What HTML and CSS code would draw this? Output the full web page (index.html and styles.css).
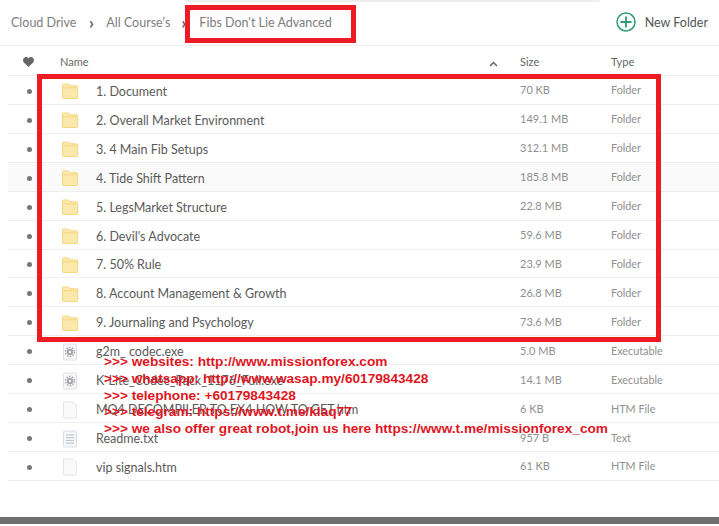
FILE: index.html
```html
<!DOCTYPE html>
<html lang="en">
<head>
<meta charset="utf-8">
<title>Fibs Don't Lie Advanced</title>
<link rel="stylesheet" href="styles.css">
</head>
<body>
<div class="page">
  <div class="topstrip"></div>
  <header class="topbar">
    <nav class="crumbs">
      <span>Cloud Drive</span><span class="sep">&#8250;</span><span>All Course's</span><span class="sep sep-last">&#8250;</span><span>Fibs Don't Lie Advanced</span>
    </nav>
    <div class="newfolder">
      <svg width="20" height="20" viewBox="0 0 20 20"><circle cx="10" cy="10" r="9" fill="none" stroke="#2f9b78" stroke-width="1.5"/><path d="M10 4.5v11M4.5 10h11" stroke="#2f9b78" stroke-width="1.8" fill="none"/></svg>
      <span>New Folder</span>
    </div>
  </header>
  <div class="row head">
    <div class="c-fav"><svg width="11" height="10" viewBox="0 0 11 10"><path d="M5.5 10 .9 5.4C-.4 4 -.2 1.800 1.200.700 2.600-.3 4.500 0 5.500 1.500 6.500 0 8.400-.3 9.800.7 11.200 1.800 11.400 4 10.100 5.400Z" fill="#666"/></svg></div>
    <div class="c-name"><span>Name</span><svg class="sort" width="9" height="6" viewBox="0 0 9 6"><path d="M1 5l3.500-3.500L8 5" fill="none" stroke="#666" stroke-width="1.500"/></svg></div>
    <div class="c-size">Size</div>
    <div class="c-type">Type</div>
  </div>
  <div class="row"><div class="c-fav"><i class="dot"></i></div><div class="c-icon"><svg class="ico"><use href="#folder"/></svg></div><div class="c-title">1. Document</div><div class="c-size">70 KB</div><div class="c-type">Folder</div></div>
  <div class="row"><div class="c-fav"><i class="dot"></i></div><div class="c-icon"><svg class="ico"><use href="#folder"/></svg></div><div class="c-title">2. Overall Market Environment</div><div class="c-size">149.1 MB</div><div class="c-type">Folder</div></div>
  <div class="row"><div class="c-fav"><i class="dot"></i></div><div class="c-icon"><svg class="ico"><use href="#folder"/></svg></div><div class="c-title">3. 4 Main Fib Setups</div><div class="c-size">312.1 MB</div><div class="c-type">Folder</div></div>
  <div class="row hover"><div class="c-fav"><i class="dot"></i></div><div class="c-icon"><svg class="ico"><use href="#folder"/></svg></div><div class="c-title">4. Tide Shift Pattern</div><div class="c-size">185.8 MB</div><div class="c-type">Folder</div></div>
  <div class="row"><div class="c-fav"><i class="dot"></i></div><div class="c-icon"><svg class="ico"><use href="#folder"/></svg></div><div class="c-title">5. LegsMarket Structure</div><div class="c-size">22.8 MB</div><div class="c-type">Folder</div></div>
  <div class="row"><div class="c-fav"><i class="dot"></i></div><div class="c-icon"><svg class="ico"><use href="#folder"/></svg></div><div class="c-title">6. Devil's Advocate</div><div class="c-size">59.6 MB</div><div class="c-type">Folder</div></div>
  <div class="row"><div class="c-fav"><i class="dot"></i></div><div class="c-icon"><svg class="ico"><use href="#folder"/></svg></div><div class="c-title">7. 50% Rule</div><div class="c-size">23.9 MB</div><div class="c-type">Folder</div></div>
  <div class="row"><div class="c-fav"><i class="dot"></i></div><div class="c-icon"><svg class="ico"><use href="#folder"/></svg></div><div class="c-title">8. Account Management &amp; Growth</div><div class="c-size">26.8 MB</div><div class="c-type">Folder</div></div>
  <div class="row"><div class="c-fav"><i class="dot"></i></div><div class="c-icon"><svg class="ico"><use href="#folder"/></svg></div><div class="c-title">9. Journaling and Psychology</div><div class="c-size">73.6 MB</div><div class="c-type">Folder</div></div>
  <div class="row"><div class="c-fav"><i class="dot"></i></div><div class="c-icon"><svg class="ico"><use href="#exe"/></svg></div><div class="c-title">g2m_ codec.exe</div><div class="c-size">5.0 MB</div><div class="c-type">Executable</div></div>
  <div class="row"><div class="c-fav"><i class="dot"></i></div><div class="c-icon"><svg class="ico"><use href="#exe"/></svg></div><div class="c-title">K-Lite_Codec_Pack_1176_Full.exe</div><div class="c-size">14.1 MB</div><div class="c-type">Executable</div></div>
  <div class="row"><div class="c-fav"><i class="dot"></i></div><div class="c-icon"><svg class="ico"><use href="#file"/></svg></div><div class="c-title">MQ4 DECOMPILER TO EX4 HOW TO GET.htm</div><div class="c-size">6 KB</div><div class="c-type">HTM File</div></div>
  <div class="row"><div class="c-fav"><i class="dot"></i></div><div class="c-icon"><svg class="ico"><use href="#text"/></svg></div><div class="c-title">Readme.txt</div><div class="c-size">957 B</div><div class="c-type">Text</div></div>
  <div class="row"><div class="c-fav"><i class="dot"></i></div><div class="c-icon"><svg class="ico"><use href="#file"/></svg></div><div class="c-title">vip signals.htm</div><div class="c-size">61 KB</div><div class="c-type">HTM File</div></div>
  <div class="footerbar"></div>

  <div class="mark mark-crumb"></div>
  <div class="mark mark-list"></div>
  <div class="promo">
    <p>&gt;&gt;&gt; websites: http://www.missionforex.com</p>
    <p>&gt;&gt;&gt; whatsapp: http://www.wasap.my/60179843428</p>
    <p>&gt;&gt;&gt; telephone: +60179843428</p>
    <p>&gt;&gt;&gt; telegram: https://www.t.me/klaq77</p>
    <p>&gt;&gt;&gt; we also offer great robot,join us here https://www.t.me/missionforex_com</p>
  </div>
</div>
<svg class="defs" width="0" height="0">
  <symbol id="folder" viewBox="0 0 18 18"><path d="M1.500 2.800C1.500 2.300 1.900 2 2.300 2H7.500L9 3.800H15.800C16.200 3.800 16.500 4.100 16.500 4.500V15.800C16.500 16.200 16.200 16.500 15.800 16.500H2.200C1.800 16.500 1.500 16.200 1.500 15.800Z" fill="#fbe8ac" stroke="#f5d77f" stroke-width="1"/><path d="M2 5.800H16" stroke="#f5d77f" stroke-width="1"/></symbol>
  <symbol id="file" viewBox="0 0 18 18"><path d="M2.500 1H12L15.500 4.500V16.200C15.500 16.700 15.100 17 14.700 17H3.300C2.900 17 2.500 16.700 2.500 16.200Z" fill="#fafafa" stroke="#e3e5e8" stroke-width="1"/></symbol>
  <symbol id="exe" viewBox="0 0 18 18"><rect x="2.500" y="1" width="13" height="16" rx="1" fill="#f6f6f7" stroke="#dfe1e4"/><circle cx="9" cy="9" r="3.200" fill="#a4a6a9"/><circle cx="9" cy="9" r="4.500" fill="none" stroke="#a4a6a9" stroke-width="1.400" stroke-dasharray="1.500 1.330"/><circle cx="9" cy="9" r="1.200" fill="#f6f6f7"/></symbol>
  <symbol id="text" viewBox="0 0 18 18"><rect x="2.500" y="1" width="13" height="16" rx="1" fill="#f5f7fa" stroke="#d8dde6"/><path d="M5 5h8M5 7.700h8M5 10.400h8M5 13.100h8" stroke="#b4bdcc" stroke-width="1"/></symbol>
</svg>
</body>
</html>
```
FILE: styles.css
```css
* { box-sizing: border-box; }
html, body { margin: 0; padding: 0; background: #fff; }
body { font-family: Lato, "Open Sans", sans-serif; color: #555; }
.page { position: relative; width: 719px; height: 526px; overflow: hidden; }
.topstrip { position: absolute; left: 185px; top: 0; width: 415px; height: 2px; background: #eeeeee; border-radius: 0 0 6px 6px; }
.topbar { height: 46px; display: flex; align-items: center; justify-content: space-between; padding: 0 11px; border-bottom: 1px solid #eeeeee; }
.crumbs { display: flex; align-items: center; font-size: 12.500px; color: #7d7d7d; }
.sep { width: 30px; text-align: center; font-size: 17px; line-height: 13px; color: #666; font-weight: 700; }
.sep-last { width: 29px; text-align: left; padding-left: 11px; }
.newfolder { display: flex; align-items: center; gap: 9px; font-size: 12.500px; color: #555; margin-top: -1px; }
.row { height: 28.930px; margin-left: 8px; display: flex; align-items: center; border-bottom: 1px solid #eeeeee; font-size: 12px; }
.row.head { height: 30px; color: #666; font-size: 11px; padding-top: 2px; }
.row.hover { background: #fafafa; }
.c-fav { width: 39px; padding-left: 15px; display: flex; align-items: center; }
.row:not(.head) .c-fav { padding-left: 19px; margin-top: 3px; }
.dot { width: 5px; height: 5px; border-radius: 50%; background: #777; }
.c-name { width: 473px; padding: 0 22px 0 13px; display: flex; align-items: center; justify-content: space-between; }
.sort { margin-top: 4px; }
.c-icon { width: 49px; padding-left: 14px; display: flex; margin-top: 3px; }
.ico { width: 18px; height: 18px; }
.c-title { width: 424px; font-size: 12.500px; color: #5a5a5a; white-space: nowrap; margin-top: 3px; }
.c-size { width: 91px; color: #8f8f8f; font-size: 11px; }
.head .c-size, .head .c-type { color: #666; font-size: 11px; }
.c-type { color: #8f8f8f; font-size: 10.800px; }
.footerbar { position: absolute; left: 0; right: 0; top: 517px; height: 7px; background: #6f6f6f; }
.mark { position: absolute; border: 5px solid #ed1c24; }
.mark-crumb { left: 185px; top: 5px; width: 171px; height: 38px; }
.mark-list { left: 37px; top: 74px; width: 624px; height: 268px; }
.promo { position: absolute; left: 104px; top: 354px; font-family: "Liberation Sans", Arial, sans-serif; font-weight: 700; font-size: 13.650px; color: #e0161f; }
.promo p { margin: 0; height: 16.800px; line-height: 16.800px; white-space: nowrap; }
.defs { position: absolute; }
```
